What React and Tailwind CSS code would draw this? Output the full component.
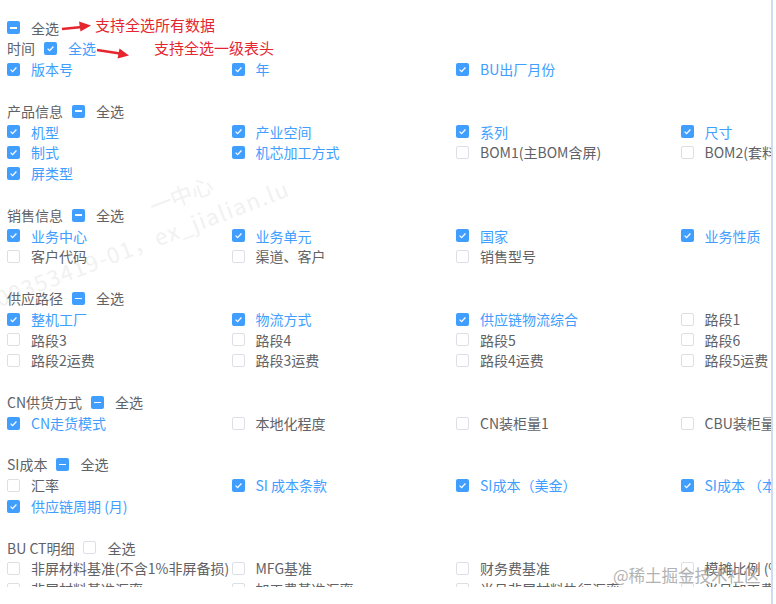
import React from 'react';

const sections = [
  {
    title: '时间',
    state: 'checked',
    items: [
      ['版本号', true],
      ['年', true],
      ['BU出厂月份', true],
    ],
  },
  {
    title: '产品信息',
    state: 'half',
    items: [
      ['机型', true],
      ['产业空间', true],
      ['系列', true],
      ['尺寸', true],
      ['制式', true],
      ['机芯加工方式', true],
      ['BOM1(主BOM含屏)', false],
      ['BOM2(套料BOM)', false],
      ['屏类型', true],
    ],
  },
  {
    title: '销售信息',
    state: 'half',
    items: [
      ['业务中心', true],
      ['业务单元', true],
      ['国家', true],
      ['业务性质', true],
      ['客户代码', false],
      ['渠道、客户', false],
      ['销售型号', false],
    ],
  },
  {
    title: '供应路径',
    state: 'half',
    items: [
      ['整机工厂', true],
      ['物流方式', true],
      ['供应链物流综合', true],
      ['路段1', false],
      ['路段3', false],
      ['路段4', false],
      ['路段5', false],
      ['路段6', false],
      ['路段2运费', false],
      ['路段3运费', false],
      ['路段4运费', false],
      ['路段5运费', false],
    ],
  },
  {
    title: 'CN供货方式',
    state: 'half',
    items: [
      ['CN走货模式', true],
      ['本地化程度', false],
      ['CN装柜量1', false],
      ['CBU装柜量1', false],
    ],
  },
  {
    title: 'SI成本',
    state: 'half',
    items: [
      ['汇率', false],
      ['SI 成本条款', true],
      ['SI成本（美金）', true],
      ['SI成本 （本币）', true],
      ['供应链周期 (月)', true],
    ],
  },
  {
    title: 'BU CT明细',
    state: 'none',
    items: [
      ['非屏材料基准(不含1%非屏备损)', false],
      ['MFG基准', false],
      ['财务费基准', false],
      ['模摊比例 (%)', false],
      ['非屏材料基准汇率', false],
      ['加工费基准汇率', false],
      ['当月非屏材料执行汇率', false],
      ['当月加工费执行汇率', false],
    ],
  },
];

const Box = ({ state }) => {
  if (state === 'checked') {
    return (
      <span className="w-[13px] h-[13px] rounded-[2px] bg-[#409eff] flex items-center justify-center shrink-0">
        <svg width="13" height="13" viewBox="0 0 13 13">
          <path d="M3.6 6.6 L5.6 8.6 L9.4 4.5" fill="none" stroke="#fff" strokeWidth="1.3" />
        </svg>
      </span>
    );
  }
  if (state === 'half') {
    return (
      <span className="w-[13px] h-[13px] rounded-[2px] bg-[#409eff] flex items-center justify-center shrink-0">
        <span className="w-[7px] h-[1.5px] bg-white" />
      </span>
    );
  }
  return <span className="w-[13px] h-[13px] rounded-[2px] border border-[#dcdfe6] bg-white shrink-0" />;
};

const Check = ({ label, state }) => (
  <div className="flex items-center h-[20.8px] whitespace-nowrap">
    <Box state={state} />
    <span className={`ml-[11px] ${state === 'checked' ? 'text-[#409eff]' : 'text-[#606266]'}`}>{label}</span>
  </div>
);

const Section = ({ title, state, items }) => (
  <div>
    <div className="flex items-center h-[20.8px] whitespace-nowrap">
      <span className="text-[#606266] mr-[9px]">{title}</span>
      <Check label="全选" state={state} />
    </div>
    <div className="grid grid-cols-[repeat(4,224.5px)]">
      {items.map(([label, on]) => (
        <Check key={label} label={label} state={on ? 'checked' : 'none'} />
      ))}
    </div>
  </div>
);

export default function App() {
  return (
    <div className="relative w-[776px] h-[604px] bg-white overflow-hidden font-['Noto_Sans_CJK_SC',sans-serif] text-[14px] leading-[20.8px]">
      {/* watermark, under the content */}
      <div className="absolute left-[-4px] top-[288px] origin-left -rotate-[21deg] text-[22px] tracking-[1.5px] text-[#f1f1f1] whitespace-nowrap pointer-events-none">
        00353419-01，ex_jialian.lu
      </div>
      <div className="absolute left-[150px] top-[196px] origin-left -rotate-[21deg] text-[22px] text-[#f1f1f1] whitespace-nowrap pointer-events-none">
        一中心
      </div>

      <div className="relative flex h-full">
        <div className="w-[771px] h-full">
          <div className="h-[587px] overflow-hidden pl-[7px] pt-[17.6px]">
            <Check label="全选" state="half" />
            <div className="flex flex-col gap-[20.8px]">
              {sections.map((s) => (
                <Section key={s.title} {...s} />
              ))}
            </div>
          </div>
        </div>
        <div className="w-[2px] h-full bg-[#cddcf3]" />
      </div>

      {/* annotations */}
      <span className="absolute left-[95px] top-[15px] text-[15px] leading-[20px] text-[#e5262f] whitespace-nowrap">
        支持全选所有数据
      </span>
      <span className="absolute left-[154px] top-[38px] text-[15px] leading-[20px] text-[#e5262f] whitespace-nowrap">
        支持全选一级表头
      </span>
      <svg className="absolute left-0 top-0 pointer-events-none" width="200" height="70" viewBox="0 0 200 70">
        <line x1="62" y1="29" x2="82" y2="27" stroke="#e5262f" strokeWidth="2.5" />
        <polygon points="91,25.5 79,21.5 80.5,31.5" fill="#e5262f" />
        <line x1="97" y1="50" x2="120" y2="53.5" stroke="#e5262f" strokeWidth="2.5" />
        <polygon points="129,55.5 119.5,48.5 117.5,58.5" fill="#e5262f" />
      </svg>

      <span className="absolute left-[613px] top-[565px] text-[16.5px] leading-[20px] text-[#a0a0a0] opacity-80 whitespace-nowrap">
        @稀土掘金技术社区
      </span>
    </div>
  );
}
